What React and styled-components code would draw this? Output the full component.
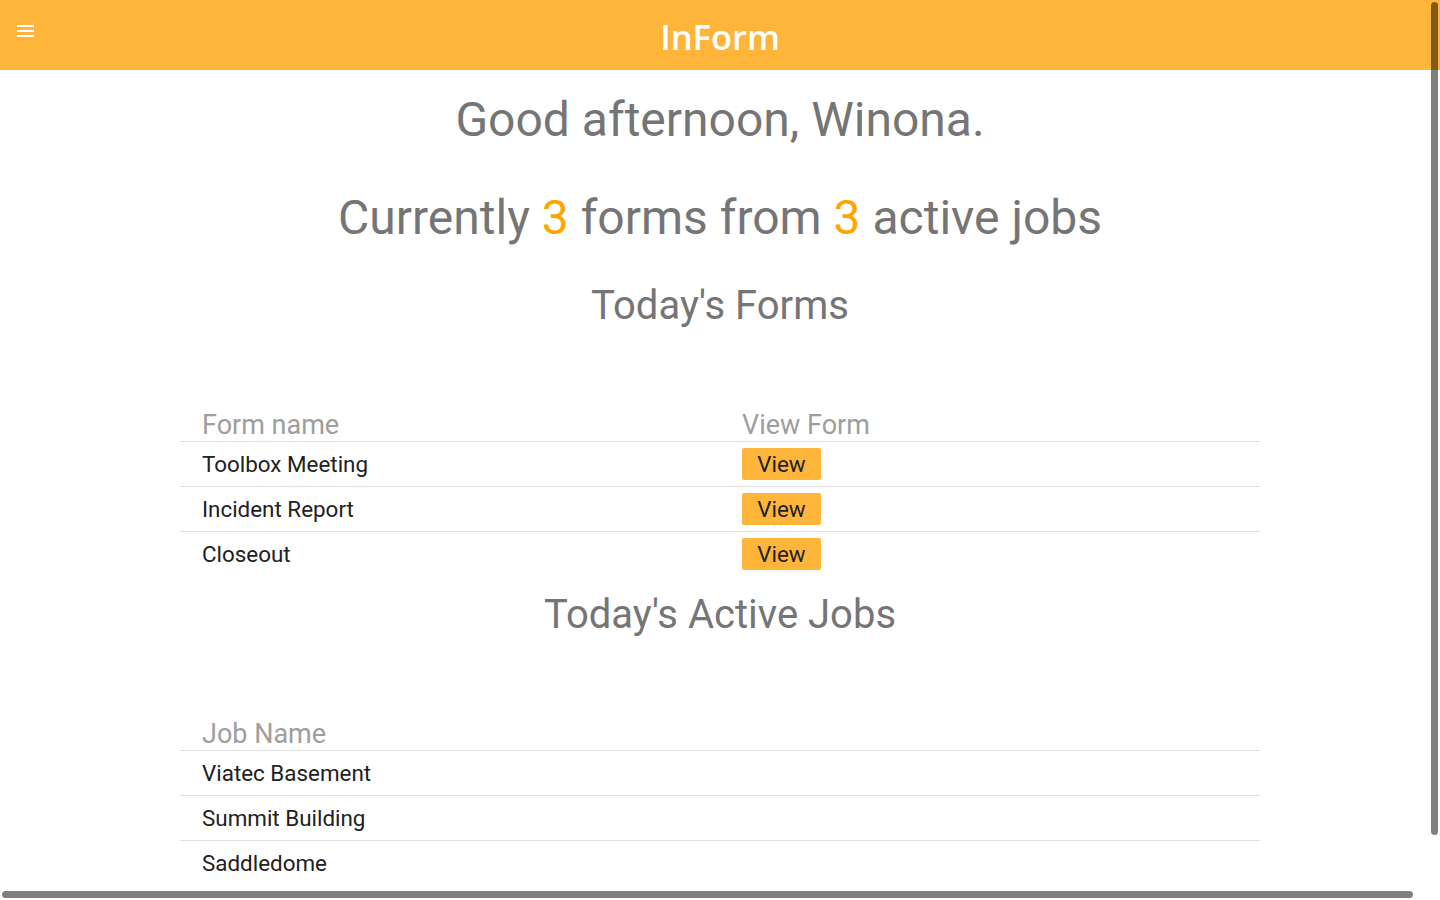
import React from "react";
import styled, { createGlobalStyle } from "styled-components";

const GlobalStyle = createGlobalStyle`
  html, body {
    margin: 0;
    padding: 0;
    background: #fff;
    font-family: Roboto, "Noto Sans", sans-serif;
  }
`;

const Page = styled.div`
  width: 100%;
  padding-bottom: 90px;
`;

const TopBar = styled.header`
  position: relative;
  height: 70px;
  background: #ffb53a;
  display: flex;
  align-items: center;
  justify-content: center;
`;

const MenuButton = styled.div`
  position: absolute;
  left: 17px;
  top: 25px;
  width: 17px;
  display: flex;
  flex-direction: column;
  gap: 3px;
  span {
    display: block;
    height: 2px;
    background: #fff;
  }
`;

const Brand = styled.div`
  font-family: "Open Sans", sans-serif;
  font-weight: 600;
  font-size: 34.5px;
  color: #fff;
  line-height: 1;
  margin-top: 4px;
`;

const Main = styled.main`
  display: flex;
  flex-direction: column;
  align-items: center;
`;

const Greeting = styled.h1`
  margin: 18px 0 0;
  font-size: 48px;
  line-height: 64px;
  font-weight: 400;
  color: #757575;
`;

const Summary = styled.h2`
  margin: 36px 0 0;
  font-size: 48px;
  line-height: 60px;
  font-weight: 400;
  color: #757575;
`;

const Count = styled.span`
  color: #ffa500;
`;

const SectionTitle = styled.h3`
  margin: ${(p) => p.$top}px 0 0;
  font-size: 40px;
  line-height: 48px;
  font-weight: 400;
  color: #757575;
`;

const Table = styled.div`
  width: 1080px;
  margin-top: 71px;
`;

const HeadRow = styled.div`
  display: grid;
  grid-template-columns: ${(p) => (p.$cols === 2 ? "1fr 1fr" : "1fr")};
  padding: 0 22px;
  height: 40px;
  align-items: end;
`;

const HeadCell = styled.div`
  font-size: 27px;
  line-height: 32px;
  color: #9e9e9e;
  padding-left: ${(p) => (p.$second ? "22px" : "0")};
`;

const Row = styled.div`
  display: grid;
  grid-template-columns: ${(p) => (p.$cols === 2 ? "1fr 1fr" : "1fr")};
  align-items: center;
  height: 45px;
  padding: 0 22px;
  border-top: 1px solid #e0e0e0;
  box-sizing: border-box;
`;

const Cell = styled.div`
  font-size: 22.4px;
  color: #212121;
  padding-left: ${(p) => (p.$second ? "22px" : "0")};
  display: flex;
  align-items: center;
`;

const ViewButton = styled.button`
  width: 79px;
  height: 32px;
  border: none;
  border-radius: 2px;
  background: #ffb53a;
  font-family: Roboto, sans-serif;
  font-size: 22.4px;
  color: #212121;
  padding: 0;
  cursor: pointer;
`;

const ScrollThumb = styled.div`
  position: fixed;
  background: rgba(0, 0, 0, 0.5);
  border-radius: 4px;
  ${(p) =>
    p.$vertical
      ? "right: 2px; top: 2px; width: 7px; height: 833px;"
      : "left: 2px; bottom: 2px; height: 7px; width: 1411px;"}
`;

const forms = ["Toolbox Meeting", "Incident Report", "Closeout"];
const jobs = ["Viatec Basement", "Summit Building", "Saddledome"];

export default function App() {
  return (
    <Page>
      <GlobalStyle />
      <TopBar>
        <MenuButton>
          <span />
          <span />
          <span />
        </MenuButton>
        <Brand>InForm</Brand>
      </TopBar>
      <Main>
        <Greeting>Good afternoon, Winona.</Greeting>
        <Summary>
          Currently <Count>3</Count> forms from <Count>3</Count> active jobs
        </Summary>
        <SectionTitle $top={34}>Today's Forms</SectionTitle>
        <Table>
          <HeadRow $cols={2}>
            <HeadCell>Form name</HeadCell>
            <HeadCell $second>View Form</HeadCell>
          </HeadRow>
          {forms.map((f) => (
            <Row key={f} $cols={2}>
              <Cell>{f}</Cell>
              <Cell $second>
                <ViewButton>View</ViewButton>
              </Cell>
            </Row>
          ))}
        </Table>
        <SectionTitle $top={15}>Today's Active Jobs</SectionTitle>
        <Table>
          <HeadRow $cols={1}>
            <HeadCell>Job Name</HeadCell>
          </HeadRow>
          {jobs.map((j) => (
            <Row key={j} $cols={1}>
              <Cell>{j}</Cell>
            </Row>
          ))}
        </Table>
      </Main>
      <ScrollThumb $vertical />
      <ScrollThumb />
    </Page>
  );
}
